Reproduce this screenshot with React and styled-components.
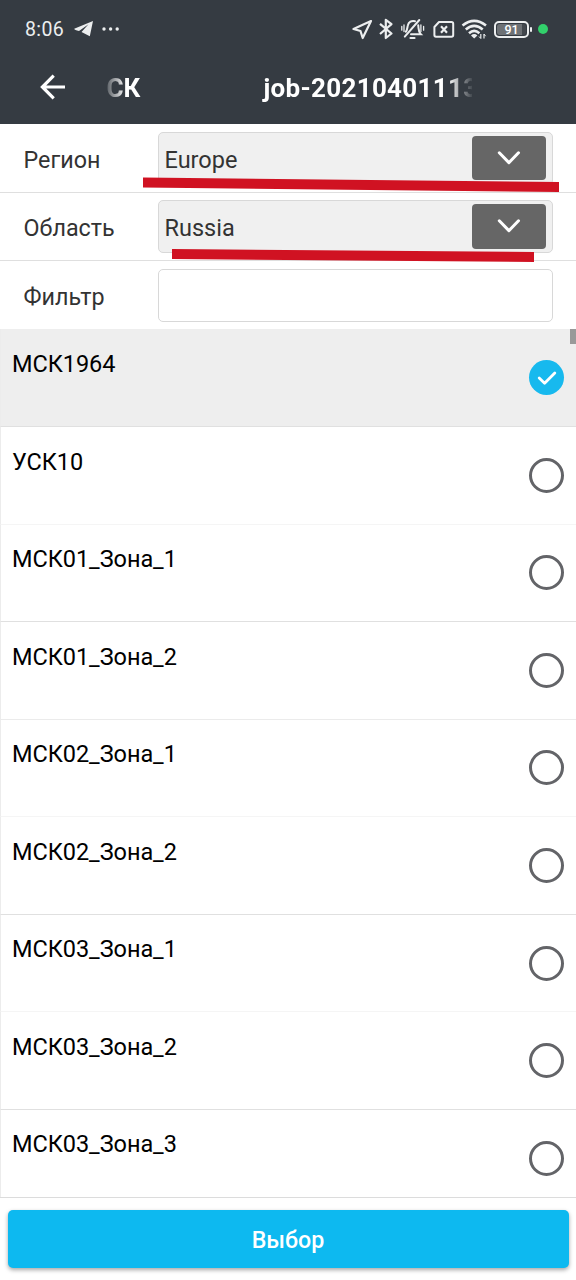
import React, { useState } from 'react'
import styled, { createGlobalStyle } from 'styled-components'

const systems = [
    'МСК1964',
    'УСК10',
    'МСК01_Зона_1',
    'МСК01_Зона_2',
    'МСК02_Зона_1',
    'МСК02_Зона_2',
    'МСК03_Зона_1',
    'МСК03_Зона_2',
    'МСК03_Зона_3',
]

function StatusIcons() {
    return (
        <StatusRight>
            <svg width="22" height="22" viewBox="351 18 22 22" fill="none" stroke="#eceeef" strokeWidth="2.2" strokeLinejoin="round">
                <path d="M371 21 L353.5 29 L360.5 31 L362.7 38 Z" />
            </svg>
            <svg width="16" height="24" viewBox="378.5 17 16 24" fill="none" stroke="#eceeef" strokeWidth="2.2" strokeLinejoin="round">
                <path d="M379.5 23.8 L391 33.5 L385.3 38 V19.8 L391 24.2 L379.5 34" />
            </svg>
            <svg width="26" height="24" viewBox="401 17 26 24" fill="none" stroke="#eceeef" strokeWidth="2" strokeLinecap="round">
                <path d="M405.8 31.8 C407.5 30 407.2 27.5 407.8 25.5 C408.6 22 411.5 20.3 415 21.2" />
                <path d="M418.2 25.2 C418.8 28.5 418 31.5 420.8 34.2 H411" />
                <path d="M419.3 20 L404.8 36.6" />
                <path d="M410.5 38 H414.5" strokeWidth="2.2" />
                <path d="M401.8 26.5 V30.2 M404 25 V31.5 M420.9 25 V31.5 M423.6 26.5 V30.2" strokeWidth="1.3" />
            </svg>
            <svg width="22" height="20" viewBox="433 19 22 20" fill="none" stroke="#eceeef" strokeWidth="2" strokeLinejoin="round">
                <path d="M439 22 H451.5 Q453.2 22 453.2 23.7 V35 Q453.2 36.7 451.5 36.7 H436 Q434.4 36.7 434.4 35 V27 Z" />
                <path d="M441 26.3 L447 32.7 M447 26.3 L441 32.7" strokeWidth="2.2" />
            </svg>
            <svg width="26" height="22" viewBox="461 18 26 22" fill="none" stroke="#eceeef" strokeWidth="2.6">
                <path d="M462.5 25.5 Q474.2 16.3 486 25.5" />
                <path d="M465.8 29.5 Q474.2 22.4 482.7 29.5" />
                <path d="M469 33.2 Q474.2 28.6 479.4 33.2" />
                <path d="M471 35.4 Q474.2 32.7 477.4 35.4 L474.2 38.4 Z" fill="#eceeef" stroke="none" />
                <path d="M480.8 34 V38.4 M484 34 V38.4" strokeWidth="1.2" />
                <path d="M479 36.5 L480.8 38.5 M484 34 L485.6 36.2" strokeWidth="1" />
            </svg>
            <Battery>
                <BatteryCase><BatteryLevel>91</BatteryLevel></BatteryCase>
                <BatteryTip />
            </Battery>
            <ActiveDot />
        </StatusRight>
    )
}

function SelectField({ label, value }) {
    return (
        <FieldRow>
            <Label>{label}</Label>
            <SelectBox>
                <span>{value}</span>
                <DropButton type="button" aria-label={label}>
                    <svg width="24" height="18" viewBox="0 0 24 18" fill="none" stroke="#fff" strokeWidth="3" strokeLinecap="round" strokeLinejoin="round">
                        <path d="M2.3 3.8 L11.9 13.6 L21.5 3.8" />
                    </svg>
                </DropButton>
            </SelectBox>
        </FieldRow>
    )
}

function App() {
    const [selected, setSelected] = useState(0)
    const [filter, setFilter] = useState('')

    return (
        <Screen>
            <GlobalStyle />
            <Header>
                <StatusBar>
                    <Clock>8:06</Clock>
                    <svg width="20" height="18" viewBox="74 21 20 18" fill="#eceeef">
                        <path d="M93 22 L74.2 29.7 Q74.5 31 79 32 L88.5 25.3 L81.5 33 L89.8 37.2 Z" />
                    </svg>
                    <svg width="18" height="4" viewBox="0 0 18 4" fill="#eceeef">
                        <circle cx="2" cy="2" r="1.7" />
                        <circle cx="8.6" cy="2" r="1.7" />
                        <circle cx="15.2" cy="2" r="1.7" />
                    </svg>
                    <StatusIcons />
                </StatusBar>
                <TitleBar>
                    <svg width="26" height="26" viewBox="0 0 26 26" fill="none" stroke="#fff" strokeWidth="3.2">
                        <path d="M25 13 H3 M13.7 1.7 L2.4 13 L13.7 24.3" />
                    </svg>
                    <Title>СК</Title>
                    <JobName>job-20210401113</JobName>
                </TitleBar>
            </Header>
            <Form>
                <SelectField label="Регион" value="Europe" />
                <SelectField label="Область" value="Russia" />
                <FieldRow>
                    <Label>Фильтр</Label>
                    <FilterInput value={filter} onChange={(e) => setFilter(e.target.value)} />
                </FieldRow>
                <Marker width="576" height="100" viewBox="0 170 576 100">
                    <path d="M143 177.5 L559 182 V192 L143 187.5 Z" />
                    <path d="M172 249 L534 252 V262 L172 259 Z" />
                </Marker>
            </Form>
            <List>
                {systems.map((name, i) => (
                    <Item key={name} $active={i === selected} onClick={() => setSelected(i)}>
                        <span>{name}</span>
                        <Radio $active={i === selected}>
                            {i === selected && (
                                <svg width="20" height="16" viewBox="0 0 20 16" fill="none" stroke="#fff" strokeWidth="2.8" strokeLinecap="round" strokeLinejoin="round">
                                    <path d="M2.2 8 L7.6 13.2 L17.8 2.9" />
                                </svg>
                            )}
                        </Radio>
                    </Item>
                ))}
                <ScrollThumb />
            </List>
            <Footer>
                <SubmitButton type="button">Выбор</SubmitButton>
            </Footer>
        </Screen>
    )
}

const GlobalStyle = createGlobalStyle`
    * {
        box-sizing: border-box;
    }
    body {
        margin: 0;
        background: #fff;
        font-family: Roboto, "Liberation Sans", sans-serif;
    }
    svg {
        display: block;
        flex-shrink: 0;
    }
`;

const Screen = styled.div`
    display: flex;
    flex-direction: column;
    width: 576px;
    height: 1280px;
    overflow: hidden;
    background: #fff;
`;

const Header = styled.header`
    flex: none;
    height: 124px;
    background: #353b42;
    color: #fff;
`;

const StatusBar = styled.div`
    display: flex;
    align-items: center;
    height: 58px;
    padding-left: 25px;
    > svg + svg {
        margin-left: 8px;
    }
`;

const Clock = styled.span`
    width: 49px;
    padding-top: 1px;
    font-size: 19.5px;
    letter-spacing: .35px;
    color: #eceeef;
`;

const StatusRight = styled.div`
    display: flex;
    align-items: center;
    margin-left: auto;
    padding-right: 28px;
    gap: 6px;
`;

const Battery = styled.div`
    display: flex;
    align-items: center;
    gap: 1px;
    margin-left: 1px;
`;

const BatteryCase = styled.div`
    width: 35px;
    height: 17px;
    padding: 1px;
    border: 2px solid #eceeef;
    border-radius: 5px;
`;

const BatteryLevel = styled.div`
    display: flex;
    align-items: center;
    justify-content: center;
    height: 100%;
    border-radius: 3px;
    background: linear-gradient(90deg, #6d7175 87%, #42474d 87%);
    color: #fff;
    font-size: 12.5px;
    font-weight: 500;
`;

const BatteryTip = styled.div`
    width: 2px;
    height: 5px;
    border-radius: 1px;
    background: #eceeef;
`;

const ActiveDot = styled.div`
    width: 10px;
    height: 10px;
    border-radius: 50%;
    background: #32d06b;
`;

const TitleBar = styled.div`
    display: flex;
    align-items: center;
    height: 58px;
    padding-left: 39.5px;
    font-size: 26px;
    font-weight: 700;
    white-space: nowrap;
`;

const Title = styled.div`
    width: 156.5px;
    padding: 2px 0 0 41px;
    mask-image: linear-gradient(90deg, transparent 36px, #000 60px);
`;

const JobName = styled.div`
    width: 249.5px;
    padding: 2px 0 0 41.5px;
    overflow: hidden;
    letter-spacing: .3px;
    mask-image: linear-gradient(90deg, #000 226px, transparent 252px);
`;

const Form = styled.div`
    position: relative;
    flex: none;
    height: 205px;
`;

const FieldRow = styled.div`
    display: flex;
    align-items: center;
    height: 68px;
    padding: 0 23.5px 0 0;
    border-bottom: 1px solid #dfdfdf;
    color: #333;
    &:first-child {
        height: 69px;
    }
    &:nth-child(3) {
        border-bottom: none;
    }
`;

const Label = styled.label`
    width: 157.5px;
    padding: 3px 0 0 23.5px;
    font-size: 23.3px;
`;

const SelectBox = styled.div`
    display: flex;
    flex: 1;
    align-items: flex-start;
    justify-content: space-between;
    height: 53px;
    padding: 3px 6px 0;
    border: 1.5px solid #d8d8d8;
    border-radius: 5px;
    background: #f0f0f0;
    font-size: 23.5px;
    line-height: 48px;
`;

const DropButton = styled.button`
    display: flex;
    align-items: center;
    justify-content: center;
    width: 74px;
    height: 44.5px;
    padding: 0;
    border: none;
    border-radius: 4px;
    background: #666;
`;

const FilterInput = styled.input`
    flex: 1;
    min-width: 0;
    height: 53px;
    border: 1.5px solid #d8d8d8;
    border-radius: 5px;
    background: #fff;
    font: inherit;
    outline: none;
`;

/* red marker strokes drawn over the form */
const Marker = styled.svg`
    position: absolute;
    top: 46px;
    left: 0;
    fill: #d01222;
    pointer-events: none;
`;

const List = styled.div`
    position: relative;
    flex: none;
    height: 869px;
    overflow: hidden;
    border-bottom: 1px solid #dcdcdc;
`;

const Item = styled.div`
    display: flex;
    align-items: center;
    justify-content: space-between;
    height: 97.57px;
    padding: 0 12px 0 11px;
    border-left: 1px solid #ececec;
    border-bottom: 1px solid #e0e0e0;
    background: ${(p) => (p.$active ? '#eee' : '#fff')};
    color: #000;
    &:first-child {
        height: 98px;
    }
    &:nth-child(2), &:nth-child(5), &:nth-child(7) {
        border-bottom-color: #f5f5f5;
    }
    &:nth-child(4) {
        border-bottom-color: #ebebeb;
    }
    > span {
        align-self: flex-start;
        padding-top: 19.5px;
        font-size: 23.5px;
        line-height: 30px;
        letter-spacing: -.05px;
    }
`;

const Radio = styled.div`
    display: flex;
    align-items: center;
    justify-content: center;
    width: 35px;
    height: 35px;
    border: ${(p) => (p.$active ? 'none' : '3px solid #636468')};
    border-radius: 50%;
    background: ${(p) => (p.$active ? '#17b9ee' : 'transparent')};
`;

const ScrollThumb = styled.div`
    position: absolute;
    top: 0;
    right: 0;
    width: 6px;
    height: 15px;
    background: #999;
`;

const Footer = styled.footer`
    padding: 12px 7.5px 0;
`;

const SubmitButton = styled.button`
    width: 100%;
    height: 58px;
    padding-top: 3px;
    border: none;
    border-radius: 5px;
    background: #0db9f0;
    box-shadow: 0 2px 4px rgba(0, 0, 0, .35);
    color: #fff;
    font-family: inherit;
    font-size: 23.2px;
    font-weight: 500;
`;

export default App;
